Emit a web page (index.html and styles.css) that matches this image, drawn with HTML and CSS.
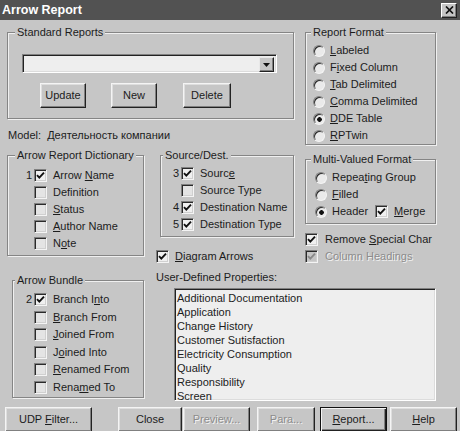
FILE: index.html
```html
<!DOCTYPE html>
<html>
<head>
<meta charset="utf-8">
<title>Arrow Report</title>
<link rel="stylesheet" href="styles.css">
</head>
<body>
<div class="win">
  <div class="titlebar">
    <span class="title">Arrow Report</span>
    <span class="xbtn"><svg width="9" height="8" viewBox="0 0 9 8"><path d="M1 0.5L8 7.5M8 0.5L1 7.5" stroke="#111" stroke-width="1.7" fill="none"/></svg></span>
  </div>

  <div class="body">
    <div class="top">
      <div class="leftcol">
        <div class="group std">
          <div class="legend">Standard Reports</div>
          <div class="combo">
            <span class="combo-field"></span>
            <span class="combo-btn"><svg width="7" height="4" viewBox="0 0 7 4"><path d="M0 0H7L3.5 4Z" fill="#111"/></svg></span>
          </div>
          <div class="std-buttons">
            <span class="btn b-update"><span>Update</span></span>
            <span class="btn b-new"><span>New</span></span>
            <span class="btn b-delete"><span>Delete</span></span>
          </div>
        </div>

        <div class="model">Model:&nbsp; Деятельность компании</div>

        <div class="pair">
          <div class="group dict">
            <div class="legend">Arrow Report Dictionary</div>
            <div class="rows rows-dict">
              <div class="row"><span class="num">1</span><span class="cb on"><svg width="11" height="11" viewBox="0 0 11 11"><path d="M2 5.2L4.3 7.6L9 2.6" stroke="#111" stroke-width="1.9" fill="none"/></svg></span><span>Arrow <u>N</u>ame</span></div>
              <div class="row"><span class="num"></span><span class="cb"></span><span>Definition</span></div>
              <div class="row"><span class="num"></span><span class="cb"></span><span><u>S</u>tatus</span></div>
              <div class="row"><span class="num"></span><span class="cb"></span><span><u>A</u>uthor Name</span></div>
              <div class="row"><span class="num"></span><span class="cb"></span><span>N<u>o</u>te</span></div>
            </div>
          </div>

          <div class="srccol">
            <div class="group src">
              <div class="legend">Source/Dest.</div>
              <div class="rows rows-src">
                <div class="row"><span class="num">3</span><span class="cb on"><svg width="11" height="11" viewBox="0 0 11 11"><path d="M2 5.2L4.3 7.6L9 2.6" stroke="#111" stroke-width="1.9" fill="none"/></svg></span><span>Sourc<u>e</u></span></div>
                <div class="row"><span class="num"></span><span class="cb"></span><span>Source Type</span></div>
                <div class="row"><span class="num">4</span><span class="cb on"><svg width="11" height="11" viewBox="0 0 11 11"><path d="M2 5.2L4.3 7.6L9 2.6" stroke="#111" stroke-width="1.9" fill="none"/></svg></span><span>Destination Name</span></div>
                <div class="row"><span class="num">5</span><span class="cb on"><svg width="11" height="11" viewBox="0 0 11 11"><path d="M2 5.2L4.3 7.6L9 2.6" stroke="#111" stroke-width="1.9" fill="none"/></svg></span><span>Destination Type</span></div>
              </div>
            </div>
            <div class="row diagram"><span class="cb on"><svg width="11" height="11" viewBox="0 0 11 11"><path d="M2 5.2L4.3 7.6L9 2.6" stroke="#111" stroke-width="1.9" fill="none"/></svg></span><span><u>D</u>iagram Arrows</span></div>
          </div>
        </div>
      </div>

      <div class="rightcol">
        <div class="group fmt">
          <div class="legend">Report Format</div>
          <div class="rows rows-fmt">
            <div class="row"><span class="rb"></span><span><u>L</u>abeled</span></div>
            <div class="row"><span class="rb"></span><span>F<u>i</u>xed Column</span></div>
            <div class="row"><span class="rb"></span><span><u>T</u>ab Delimited</span></div>
            <div class="row"><span class="rb"></span><span><u>C</u>omma Delimited</span></div>
            <div class="row"><span class="rb sel"></span><span><u>D</u>DE Table</span></div>
            <div class="row"><span class="rb"></span><span><u>R</u>PTwin</span></div>
          </div>
        </div>

        <div class="group mv">
          <div class="legend">Multi-Valued Format</div>
          <div class="rows rows-mv">
            <div class="row"><span class="rb"></span><span>Repea<u>t</u>ing Group</span></div>
            <div class="row"><span class="rb"></span><span><u>F</u>illed</span></div>
            <div class="row"><span class="rb sel"></span><span>Header</span><span class="cb on merge"><svg width="11" height="11" viewBox="0 0 11 11"><path d="M2 5.2L4.3 7.6L9 2.6" stroke="#111" stroke-width="1.9" fill="none"/></svg></span><span><u>M</u>erge</span></div>
          </div>
        </div>

        <div class="row opt first"><span class="cb on"><svg width="11" height="11" viewBox="0 0 11 11"><path d="M2 5.2L4.3 7.6L9 2.6" stroke="#111" stroke-width="1.9" fill="none"/></svg></span><span>Remove <u>S</u>pecial Char</span></div>
        <div class="row opt disabled"><span class="cb on off"><svg width="11" height="11" viewBox="0 0 11 11"><path d="M2 5.2L4.3 7.6L9 2.6" stroke="#8a8a8a" stroke-width="1.9" fill="none"/></svg></span><span>Column Headings</span></div>
      </div>
    </div>

    <div class="bottom">
      <div class="group bundle">
        <div class="legend">Arrow Bundle</div>
        <div class="rows rows-bundle">
          <div class="row"><span class="num">2</span><span class="cb on"><svg width="11" height="11" viewBox="0 0 11 11"><path d="M2 5.2L4.3 7.6L9 2.6" stroke="#111" stroke-width="1.9" fill="none"/></svg></span><span>Branch I<u>n</u>to</span></div>
          <div class="row"><span class="num"></span><span class="cb"></span><span><u>B</u>ranch From</span></div>
          <div class="row"><span class="num"></span><span class="cb"></span><span><u>J</u>oined From</span></div>
          <div class="row"><span class="num"></span><span class="cb"></span><span>J<u>o</u>ined Into</span></div>
          <div class="row"><span class="num"></span><span class="cb"></span><span><u>R</u>enamed From</span></div>
          <div class="row"><span class="num"></span><span class="cb"></span><span>Rena<u>m</u>ed To</span></div>
        </div>
      </div>

      <div class="udp">
        <div class="udp-label">User-Defined Properties:</div>
        <div class="listbox">
          <div>Additional Documentation</div>
          <div>Application</div>
          <div>Change History</div>
          <div>Customer Sutisfaction</div>
          <div>Electricity Consumption</div>
          <div>Quality</div>
          <div>Responsibility</div>
          <div>Screen</div>
        </div>
      </div>
    </div>
  </div>

  <div class="buttons">
    <span class="btn b-udp"><span>UDP <u>F</u>ilter...</span></span>
    <span class="btn b-close"><span>Close</span></span>
    <span class="btn b-preview disabled"><span>Preview...</span></span>
    <span class="btn b-para disabled"><span>Para...</span></span>
    <span class="btn b-report default"><span><u>R</u>eport...</span></span>
    <span class="btn b-help"><span><u>H</u>elp</span></span>
  </div>
</div>
</body>
</html>
```

FILE: styles.css
```css
* { box-sizing: border-box; }

html, body {
  margin: 0;
  padding: 0;
}

body {
  background: #c6c6c6;
  font-family: "Liberation Sans", Arial, sans-serif;
  font-size: 11px;
  line-height: 13px;
  color: #1c1c1c;
}

u { text-decoration: underline; text-underline-offset: 1px; }

.win {
  width: 460px;
  height: 431px;
  overflow: hidden;
  background: #c6c6c6;
}

/* title bar */
.titlebar {
  height: 20px;
  background: #525252;
  display: flex;
  align-items: center;
  justify-content: space-between;
  padding: 0 3px 0 2px;
}
.title {
  color: #fff;
  font-weight: bold;
  font-size: 12.5px;
}
.xbtn {
  width: 16px;
  height: 15px;
  background: #c6c6c6;
  border: 1px solid;
  border-color: #fff #222 #222 #fff;
  box-shadow: inset -1px -1px #808080;
  display: flex;
  align-items: center;
  justify-content: center;
}

/* layout */
.body { padding-left: 7px; }
.top { display: flex; align-items: flex-start; }
.leftcol { width: 287px; }
.rightcol { width: 131px; margin-left: 11px; }

/* group boxes */
.group {
  border: 1px solid #858585;
  box-shadow: inset 1px 1px #f0f0f0, 1px 1px #f0f0f0;
}
.legend {
  width: fit-content;
  margin: -7px 0 0 7px;
  padding: 0 2px;
  background: #c6c6c6;
  line-height: 13px;
}

.std { margin-top: 12px; height: 87px; }

.combo {
  margin: 15px 0 0 14px;
  width: 255px;
  height: 19px;
  background: #eeeeee;
  border: 1px solid;
  border-color: #808080 #fff #fff #808080;
  box-shadow: inset 1px 1px #222, inset -1px -1px #dcdcdc;
  display: flex;
  justify-content: flex-end;
  padding: 2px;
}
.combo-field { flex: 1; }
.combo-btn {
  width: 15px;
  height: 15px;
  background: #c6c6c6;
  border: 1px solid;
  border-color: #e8e8e8 #222 #222 #e8e8e8;
  box-shadow: inset -1px -1px #808080;
  display: flex;
  align-items: center;
  justify-content: center;
}

.std-buttons {
  display: flex;
  margin: 10px 0 0 32px;
}

/* buttons */
.btn {
  height: 25px;
  display: flex;
  align-items: center;
  justify-content: center;
  white-space: nowrap;
  background: #c6c6c6;
  border: 1px solid;
  border-color: #f4f4f4 #222 #222 #f4f4f4;
  box-shadow: inset -1px -1px #808080, inset 1px 1px #dedede;
}
.btn.default {
  border-color: #111;
  box-shadow: inset 1px 1px #f4f4f4, inset -1px -1px #222, inset -2px -2px #808080;
}
.btn.disabled {
  color: #8c8c8c;
  text-shadow: 1px 1px 0 #f2f2f2;
}
.b-update { width: 46px; }
.b-new { width: 46px; margin-left: 25px; }
.b-delete { width: 48px; margin-left: 26px; }

.model {
  margin-top: 10px;
  padding-left: 1px;
}

.pair { display: flex; align-items: flex-start; margin-top: 13px; }
.dict { width: 137px; height: 101px; }
.srccol { width: 134px; margin-left: 16px; }
.src { height: 82px; }
.src .legend { margin-left: 2px; }

/* rows */
.row {
  display: flex;
  align-items: center;
  height: 17px;
  white-space: nowrap;
}
.num {
  width: 8px;
  text-align: right;
  margin-right: 2px;
}
.rows-dict { margin-top: 5px; }
.rows-dict .row { padding-left: 16px; }
.rows-src { margin-top: 3px; }
.rows-src .row { padding-left: 10px; }
.rows-bundle { margin-top: 4px; }
.rows-bundle .row { padding-left: 11px; height: 17.5px; }

.diagram { margin: 11px 0 0 -4px; }

/* checkbox */
.cb {
  width: 13px;
  height: 13px;
  flex: none;
  margin-right: 6px;
  background: #e4e4e4;
  border: 1px solid;
  border-color: #808080 #f4f4f4 #f4f4f4 #808080;
  box-shadow: inset 1px 1px #2a2a2a, inset -1px -1px #d0d0d0;
  display: flex;
  align-items: center;
  justify-content: center;
}
.cb.on { background: #f0f0f0; }
.cb.off { background: #c6c6c6; }

/* radio */
.rb {
  width: 12px;
  height: 12px;
  flex: none;
  margin-right: 5px;
  border-radius: 50%;
  background: #eaeaea;
  border: 1px solid;
  border-color: #808080 #f4f4f4 #f4f4f4 #808080;
  box-shadow: inset 1px 1px #2a2a2a;
}
.rb.sel {
  background: radial-gradient(circle at 55% 55%, #111 0 2px, #eaeaea 2.6px);
}

/* right column */
.fmt { margin-top: 12px; height: 113px; }
.fmt .legend, .mv .legend { margin-left: 5px; }
.rows-fmt { margin-top: 3px; }
.rows-fmt .row { padding-left: 7px; }

.mv { margin-top: 14px; height: 65px; }
.rows-mv { margin-top: 3px; }
.rows-mv .row { padding-left: 9px; }
.merge { margin-left: 7px; }

.opt .cb { margin-right: 7px; }
.opt.first { margin-top: 7px; }
.opt.disabled {
  color: #8c8c8c;
  text-shadow: 1px 1px 0 #f2f2f2;
}

/* bottom */
.bottom { display: flex; align-items: flex-start; }
.bundle { width: 132px; height: 118px; margin: 15px 0 0 5px; }
.bundle .legend { margin-left: 2px; }

.udp { margin: 6px 0 0 12px; }
.listbox {
  margin: 4px 0 0 18px;
  width: 262px;
  height: 113px;
  overflow: hidden;
  background: #eeeeee;
  border: 1px solid;
  border-color: #808080 #fff #fff #808080;
  box-shadow: inset 1px 1px #222, inset -1px -1px #dcdcdc;
  padding: 2px 2px 0 2px;
  line-height: 14px;
}

/* bottom buttons */
.buttons {
  display: flex;
  margin-top: 6px;
  padding-left: 5px;
}
.b-udp { width: 87px; }
.b-close { width: 64px; margin-left: 26px; }
.b-preview { width: 67px; margin-left: 1px; }
.b-para { width: 58px; margin-left: 7px; }
.b-report { width: 67px; margin-left: 5px; }
.b-help { width: 67px; margin-left: 3px; }
```
